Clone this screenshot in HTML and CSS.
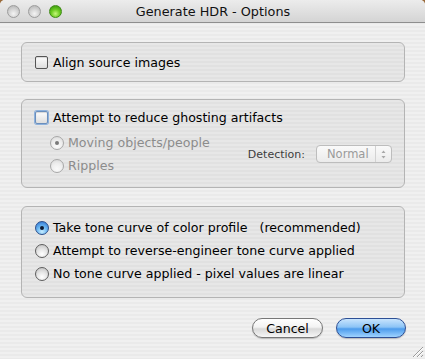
FILE: index.html
```html
<!DOCTYPE html>
<html lang="en">
<head>
	<meta charset="UTF-8">
	<title>Generate HDR - Options</title>
	<link rel="stylesheet" href="styles.css">
</head>
<body>
	<div class="window">
		<div class="titlebar">
			<div class="lights">
				<span class="light"></span>
				<span class="light"></span>
				<span class="light zoom"></span>
			</div>
			<div class="title">Generate HDR - Options</div>
		</div>

		<div class="content">
			<div class="group group-align">
				<label class="row"><span class="check"></span>Align source images</label>
			</div>

			<div class="group group-ghost">
				<label class="row"><span class="check focus"></span>Attempt to reduce ghosting artifacts</label>
				<div class="sub">
					<div class="sub-list">
						<label class="row disabled"><span class="radio on"></span>Moving objects/people</label>
						<label class="row disabled"><span class="radio"></span>Ripples</label>
					</div>
					<div class="detect">
						<span class="detect-label">Detection:</span>
						<span class="popup">Normal<span class="arrows"><svg width="7" height="11" viewBox="0 0 7 11"><path d="M3.5 1.5 L5.5 4 L1.5 4 Z M3.5 9.5 L5.5 7 L1.5 7 Z" fill="#a8a8a8"/></svg></span></span>
					</div>
				</div>
			</div>

			<div class="group group-tone">
				<label class="row"><span class="radio aqua"></span>Take tone curve of color profile&nbsp;&nbsp;&nbsp;(recommended)</label>
				<label class="row"><span class="radio"></span>Attempt to reverse-engineer tone curve applied</label>
				<label class="row"><span class="radio"></span>No tone curve applied - pixel values are linear</label>
			</div>

			<div class="buttons">
				<button class="btn" type="button">Cancel</button>
				<button class="btn default" type="button">OK</button>
			</div>
		</div>

		<svg class="grip" width="14" height="14" viewBox="0 0 14 14">
			<path d="M13 3 L3 13 M13 7 L7 13 M13 11 L11 13" stroke="#9a9a9a" stroke-width="1"/>
			<path d="M13 4 L4 13 M13 8 L8 13" stroke="#ffffff" stroke-width="1"/>
		</svg>
	</div>
</body>
</html>
```

FILE: styles.css
```css
html,
body {
	margin: 0;
	padding: 0;
}

body {
	width: 425px;
	height: 359px;
	background: #9a6a3a;
	font-family: "DejaVu Sans", "Liberation Sans", sans-serif;
	font-size: 12.6px;
	color: #000;
	overflow: hidden;
}

.window {
	position: relative;
	width: 425px;
	height: 359px;
	border-radius: 5px 5px 0 0;
	overflow: hidden;
	background: repeating-linear-gradient(#f0f0f0 0, #f0f0f0 2px, #eaeaea 2px, #eaeaea 4px);
}

/* title bar */
.titlebar {
	display: flex;
	align-items: center;
	height: 22px;
	border-bottom: 1px solid #8e8e8e;
	background: linear-gradient(#ececec, #d4d4d4);
}

.lights {
	display: flex;
	gap: 8px;
	padding-left: 7px;
	width: 70px;
}

.light {
	width: 13px;
	height: 13px;
	border-radius: 50%;
	box-sizing: border-box;
	border: 1px solid #9c9c9c;
	background: radial-gradient(circle at 50% 70%, #f4f4f4 0, #d6d6d6 45%, #aeaeae 100%);
}

.light.zoom {
	border-color: #3f8a16;
	background: radial-gradient(circle at 50% 70%, #c6f77a 0, #6ccb22 45%, #2f8a0a 100%);
}

.title {
	flex: 1;
	text-align: center;
	padding-right: 76px;
	font-size: 12.8px;
	color: #111;
}

/* content */
.content {
	display: flex;
	flex-direction: column;
	padding: 19px 19px 0 21px;
}

.group {
	display: flex;
	flex-direction: column;
	border: 1px solid #b4b4b4;
	border-radius: 6px;
	background: repeating-linear-gradient(#e7e7e7 0, #e7e7e7 2px, #e1e1e1 2px, #e1e1e1 4px);
	padding-left: 13px;
	padding-right: 12px;
	margin-right: 1px;
}

.group-align {
	height: 38px;
	justify-content: center;
}

.group-ghost {
	margin-top: 17px;
	box-sizing: border-box;
	height: 89px;
	padding-top: 6px;
}

.group-tone {
	margin-top: 18px;
	height: 92px;
	box-sizing: border-box;
	padding-top: 9px;
}

.row {
	display: flex;
	align-items: center;
	height: 23px;
	white-space: nowrap;
}

.row.disabled {
	color: #8c8c8c;
}

.sub {
	display: flex;
	align-items: center;
	padding-top: 2px;
}

.sub-list {
	display: flex;
	flex-direction: column;
	padding-left: 15px;
	flex: 1;
}

.detect {
	display: flex;
	align-items: center;
	gap: 11px;
	color: #3c3c3c;
	font-size: 11px;
}

/* controls */
.check {
	display: inline-block;
	width: 13px;
	height: 13px;
	box-sizing: border-box;
	margin-right: 5px;
	border: 1px solid #555;
	border-radius: 2px;
	background: linear-gradient(#fdfdfd, #dedede);
	box-shadow: inset 0 1px 1px rgba(0, 0, 0, 0.15);
}

.check.focus {
	border-color: #6b8fbd;
	box-shadow: 0 0 0 1px #8fb2dc, inset 0 1px 1px rgba(0, 0, 0, 0.15);
}

.radio {
	position: relative;
	display: inline-block;
	width: 14px;
	height: 14px;
	box-sizing: border-box;
	margin-right: 4px;
	border: 1px solid #5e5e5e;
	border-radius: 50%;
	background: radial-gradient(circle at 50% 75%, #ffffff 0, #e6e6e6 45%, #bcbcbc 100%);
}

.disabled .radio {
	border-color: #a8a8a8;
	background: radial-gradient(circle at 50% 75%, #fafafa 0, #eeeeee 50%, #d6d6d6 100%);
}

.radio.on::after,
.radio.aqua::after {
	content: "";
	position: absolute;
	left: 4px;
	top: 4px;
	width: 4px;
	height: 4px;
	border-radius: 50%;
	background: #7a7a7a;
}

.radio.aqua {
	border-color: #2c4f8c;
	background: radial-gradient(circle at 50% 80%, #c6ecff 0, #6cb8f2 45%, #2a6fcf 100%);
}

.radio.aqua::after {
	background: #0d1a33;
}

.popup {
	display: flex;
	align-items: center;
	box-sizing: border-box;
	width: 76px;
	height: 18px;
	padding-left: 10px;
	border: 1px solid #bdbdbd;
	border-radius: 4px;
	background: linear-gradient(#fafafa, #ebebeb);
	color: #9a9a9a;
	font-size: 11.5px;
}

.arrows {
	display: flex;
	align-items: center;
	justify-content: center;
	margin-left: auto;
	width: 15px;
	height: 16px;
	border-left: 1px solid #d2d2d2;
}

/* buttons */
.buttons {
	display: flex;
	justify-content: flex-end;
	gap: 13px;
	margin-top: 20px;
}

.btn {
	width: 71px;
	height: 20px;
	padding: 0;
	border: 1px solid #777;
	border-radius: 10px;
	font-family: "DejaVu Sans", "Liberation Sans", sans-serif;
	font-size: 12.6px;
	color: #000;
	background: linear-gradient(#ffffff 0, #f3f3f3 45%, #d9d9d9 55%, #f6f6f6 100%);
	box-shadow: 0 1px 1px rgba(0, 0, 0, 0.2);
}

.btn.default {
	width: 70px;
	border-color: #2d4f95;
	background: linear-gradient(#c8e4fd 0, #8cc4f6 45%, #4d9cec 55%, #9fd3ff 100%);
}

.grip {
	position: absolute;
	right: 1px;
	bottom: 1px;
}
```
